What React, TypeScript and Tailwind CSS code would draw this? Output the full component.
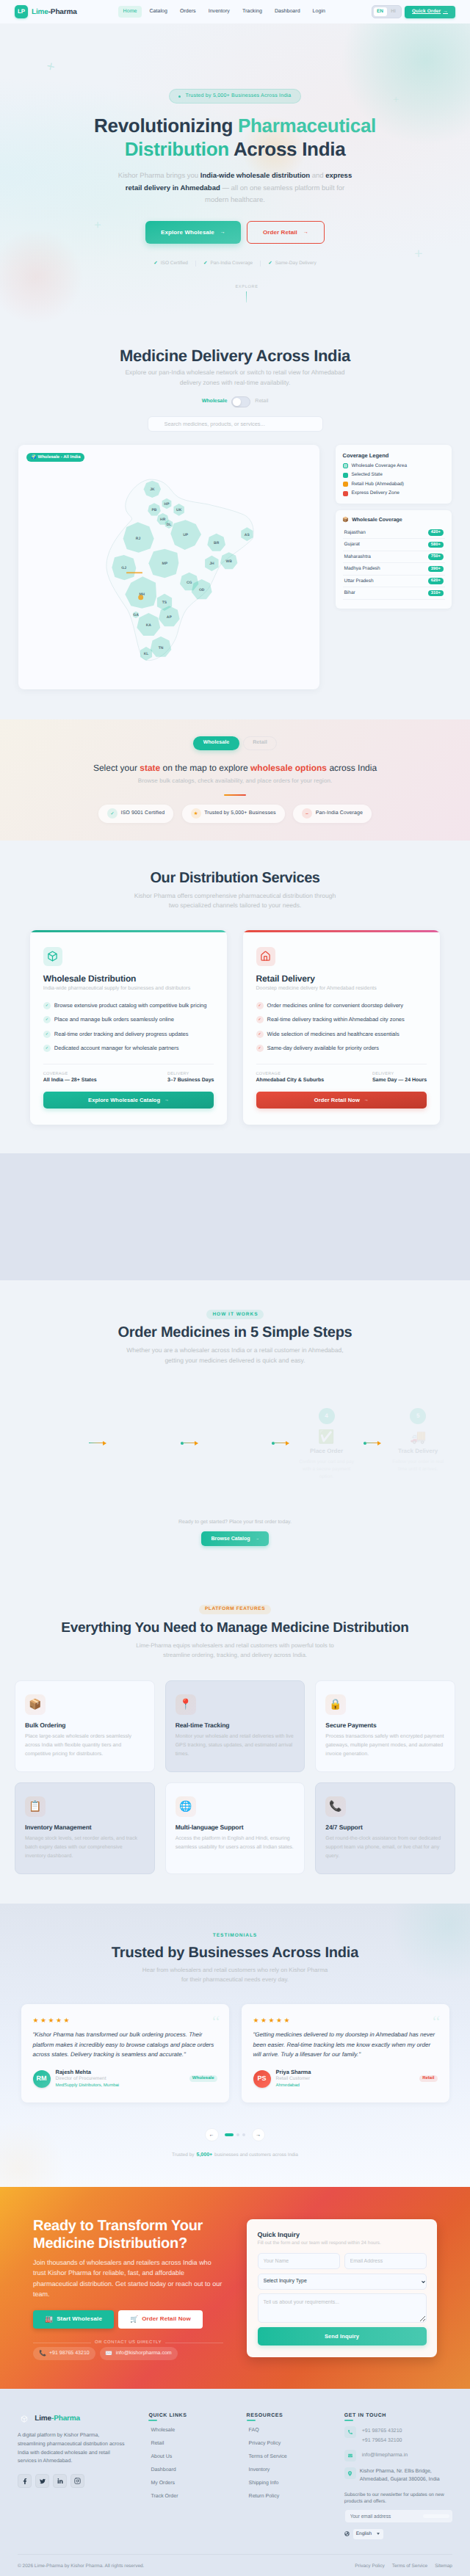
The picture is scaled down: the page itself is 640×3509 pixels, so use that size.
import type { ReactNode } from 'react';
import { Box, ChevronDown, House, Instagram } from 'lucide-react';
import { FaFacebookF, FaTwitter, FaLinkedinIn, FaPhone, FaEnvelope, FaGlobeAmericas } from 'react-icons/fa';
import { FaLocationDot } from 'react-icons/fa6';

interface MapState {
  code: string;
  x: number;
  y: number;
  r?: number;
  sides?: number;
  points?: string;
}

const navItems = ['Home', 'Catalog', 'Orders', 'Inventory', 'Tracking', 'Dashboard', 'Login'];

// Larger states carry their own outline, the rest are drawn as regular polygons
const mapStates: MapState[] = [
  { code: 'RJ', x: 144, y: 249, points: '143,183 190,201 209,250 194,291 146,307 98,293 83,250 97,203' },
  { code: 'UP', x: 338, y: 233, points: '338,174 380,191 402,233 376,278 335,296 294,276 277,230 290,188' },
  { code: 'MP', x: 253, y: 351, points: '253,292 304,308 310,350 299,395 253,411 205,398 187,351 207,303' },
  { code: 'GJ', x: 86, y: 368, points: '86,317 125,331 136,370 127,406 88,420 49,407 37,368 48,327' },
  { code: 'MH', x: 160, y: 477, points: '163,405 216,430 219,488 208,523 160,535 115,525 91,478 115,430' },
  { code: 'JK', x: 202, y: 48, r: 35, sides: 8 },
  { code: 'HP', x: 261, y: 107, r: 22, sides: 6 },
  { code: 'PB', x: 210, y: 132, r: 27, sides: 7 },
  { code: 'UK', x: 311, y: 132, r: 25, sides: 6 },
  { code: 'HR', x: 245, y: 171, r: 25, sides: 7 },
  { code: 'DL', x: 270, y: 191, r: 18, sides: 6 },
  { code: 'BR', x: 464, y: 267, r: 38, sides: 7 },
  { code: 'AS', x: 589, y: 232, r: 28, sides: 6 },
  { code: 'JH', x: 445, y: 351, r: 32, sides: 6 },
  { code: 'WB', x: 515, y: 342, r: 36, sides: 7 },
  { code: 'CG', x: 353, y: 427, r: 39, sides: 7 },
  { code: 'OD', x: 404, y: 459, r: 43, sides: 7 },
  { code: 'TS', x: 252, y: 510, r: 35, sides: 6 },
  { code: 'AP', x: 271, y: 569, r: 44, sides: 7 },
  { code: 'GA', x: 135, y: 561, r: 14, sides: 6 },
  { code: 'KA', x: 187, y: 603, r: 49, sides: 7 },
  { code: 'TN', x: 237, y: 694, r: 44, sides: 7 },
  { code: 'KL', x: 177, y: 720, r: 28, sides: 6 },
];

const coverage = [
  ['Rajasthan', '420+'],
  ['Gujarat', '580+'],
  ['Maharashtra', '750+'],
  ['Madhya Pradesh', '390+'],
  ['Uttar Pradesh', '620+'],
  ['Bihar', '310+'],
];

const legend = [
  { label: 'Wholesale Coverage Area', swatch: 'bg-[#a3e4d7] border border-[#1abc9c]' },
  { label: 'Selected State', swatch: 'bg-[#1abc9c]' },
  { label: 'Retail Hub (Ahmedabad)', swatch: 'bg-[#f39c12]' },
  { label: 'Express Delivery Zone', swatch: 'bg-[#e74c3c]' },
];

const features = [
  { icon: '📦', title: 'Bulk Ordering', text: 'Place large-scale wholesale orders seamlessly across India with flexible quantity tiers and competitive pricing for distributors.' },
  { icon: '📍', title: 'Real-time Tracking', text: 'Monitor your wholesale and retail deliveries with live GPS tracking, status updates, and estimated arrival times.' },
  { icon: '🔒', title: 'Secure Payments', text: 'Process transactions safely with encrypted payment gateways, multiple payment modes, and automated invoice generation.' },
  { icon: '📋', title: 'Inventory Management', text: 'Manage stock levels, set reorder alerts, and track batch expiry dates with our comprehensive inventory dashboard.' },
  { icon: '🌐', title: 'Multi-language Support', text: 'Access the platform in English and Hindi, ensuring seamless usability for users across all Indian states.' },
  { icon: '📞', title: '24/7 Support', text: 'Get round-the-clock assistance from our dedicated support team via phone, email, or live chat for any query.' },
];

function polygonPoints(cx: number, cy: number, r: number, sides: number) {
  return Array.from({ length: sides }, (_, i) => {
    const a = (i / sides) * Math.PI * 2 - Math.PI / 2;
    return `${(cx + r * Math.cos(a)).toFixed(1)},${(cy + r * Math.sin(a)).toFixed(1)}`;
  }).join(' ');
}

function Navbar() {
  return (
    <header className="flex h-8 items-center justify-between bg-[#f7faff] px-5">
      <div className="flex items-center gap-[5px]">
        <div className="flex size-[18px] items-center justify-center rounded-[5px] bg-[#1fbf9f] text-[8px] font-bold text-white shadow-[0_1px_3px_rgba(26,188,156,0.35)]">
          LP
        </div>
        <span className="text-[10px] font-bold tracking-[-0.16px] text-[#2c3e50]">
          <span className="text-[#1abc9c]">Lime</span>-Pharma
        </span>
      </div>
      <nav className="flex gap-[3px] text-[7px] tracking-[0.05px] text-[#34495e]">
        {navItems.map((item, i) => (
          <a
            key={item}
            className={i === 0 ? 'flex h-4 items-center rounded-[4px] bg-[#def5f0] px-[7px] text-[#1abc9c]' : 'flex h-4 items-center px-[7px]'}
          >
            {item}
          </a>
        ))}
      </nav>
      <div className="flex items-center gap-1">
        <div className="flex h-[18px] w-[41px] items-center rounded-[5px] border border-[#d3d9e6] bg-[#dde3ee] p-[1.5px] text-[6.5px] font-bold">
          <span className="flex h-3 w-[18px] items-center justify-center rounded-[3px] bg-white text-[#1abc9c]">EN</span>
          <span className="flex-1 text-center text-[#bdc3c7]">HI</span>
        </div>
        <a className="flex h-[17px] w-[69px] items-center justify-center gap-[3px] rounded-[4px] bg-linear-to-r from-[#1abc9c] to-[#2bc0a2] text-[6.5px] font-bold tracking-[0.15px] text-white underline shadow-[0_1px_3px_rgba(26,188,156,0.3)]">
          Quick Order <span className="underline">→</span>
        </a>
      </div>
    </header>
  );
}

function Hero() {
  return (
    <section className="relative h-[408px] overflow-hidden bg-[#eff3f8] pt-[89px]">
      {/* Soft background glows */}
      <div className="absolute inset-0 bg-[radial-gradient(ellipse_at_0%_50%,rgba(218,240,246,0.6),transparent_45%),radial-gradient(ellipse_at_25%_60%,rgba(218,242,234,0.4),transparent_45%),radial-gradient(ellipse_at_75%_30%,rgba(243,234,236,0.6),transparent_50%)]" />
      <div className="absolute left-[460px] top-[-70px] size-[240px] rounded-full bg-[radial-gradient(circle,rgba(26,188,156,0.18),rgba(26,188,156,0.09)_38%,transparent_68%)]" />
      <div className="absolute left-[-16px] top-[280px] size-[130px] rounded-full bg-[radial-gradient(circle,rgba(231,76,60,0.09),rgba(231,76,60,0.045)_40%,transparent_70%)]" />
      <div className="absolute left-[328px] top-[126px] size-[90px] rounded-full bg-[radial-gradient(circle,rgba(243,156,18,0.15),rgba(243,156,18,0.07)_40%,transparent_70%)]" />
      <span className="absolute left-[63px] top-[50px] rotate-12 text-[20px] leading-[18px] text-[#1abc9c]/20">+</span>
      <span className="absolute left-[535px] top-[95px] text-[14px] leading-4 text-[#1abc9c]/10">+</span>
      <span className="absolute left-[128px] top-[267px] text-[17px] leading-4 text-[#1abc9c]/15">+</span>
      <span className="absolute left-[564px] top-[306px] text-[20px] leading-4 text-[#1abc9c]/15">+</span>

      <div className="relative flex flex-col items-center text-center">
        <div className="flex h-5 items-center gap-[6px] rounded-full border border-[#1abc9c]/15 bg-[#1abc9c]/13 px-3 text-[7px] tracking-[0.24px] text-[#1abc9c]">
          <span className="size-[3px] rounded-full bg-[#1abc9c]/80" />
          Trusted by 5,000+ Businesses Across India
        </div>
        <h1 className="mt-[13.6px] text-[26px] font-bold leading-[32.5px] tracking-[-0.3px] text-[#2c3e50]">
          Revolutionizing <span className="text-[#40c6a8]">Pharmaceutical</span>
          <br />
          <span className="text-[#2fbf9f]">Distribution</span> Across India
        </h1>
        <p className="mt-[12.8px] w-[330px] text-[9.5px] leading-[16.5px] text-[#bdc3c7]">
          Kishor Pharma brings you <b className="text-[#2c3e50]">India-wide wholesale distribution</b> and{' '}
          <b className="text-[#2c3e50]">express retail delivery in Ahmedabad</b> — all on one seamless platform built for modern healthcare.
        </p>
        <div className="mt-[19.4px] flex gap-2 text-[8px] font-bold tracking-[0.1px]">
          <button className="flex h-[30.7px] w-[130px] items-center justify-center gap-2 rounded-[6px] bg-linear-to-br from-[#1abc9c] to-[#48c9b0] text-white shadow-[0_3px_8px_rgba(26,188,156,0.28)]">
            Explore Wholesale <span className="text-[7px]">→</span>
          </button>
          <button className="flex h-[30.7px] w-[106px] items-center justify-center gap-2 rounded-[6px] border border-[#e74c3c] text-[#e74c3c]">
            Order Retail <span className="text-[7px]">→</span>
          </button>
        </div>
        <div className="mt-[22px] flex h-[10px] items-center gap-[10px] text-[6.5px] text-[#bdc3c7]">
          {['ISO Certified', 'Pan-India Coverage', 'Same-Day Delivery'].map((item, i) => (
            <div key={item} className="flex items-center gap-[10px]">
              {i > 0 && <span className="h-2 w-px bg-[#dfe5ee]" />}
              <span className="flex items-center gap-1">
                <span className="font-bold text-[#1abc9c]">✓</span>
                {item}
              </span>
            </div>
          ))}
        </div>
        <div className="mt-[23.5px] flex flex-col items-center pl-8">
          <span className="text-[5.5px] leading-2 tracking-[0.75px] text-[#bdc3c7]">EXPLORE</span>
          <span className="mt-[2px] h-[15px] w-px bg-linear-to-b from-[#1abc9c]/60 to-[#1abc9c]/20" />
        </div>
      </div>
    </section>
  );
}

function IndiaMap() {
  return (
    <svg viewBox="0 0 1230 999" className="h-full w-full">
      <g transform="translate(345 133)">
        <path
          d="M200 8 C150 5 85 75 93 125 C97 155 125 160 117 174 C80 215 10 290 15 370 C20 430 75 500 100 540 C125 580 140 690 155 722 C162 745 175 748 190 748 C240 745 290 690 304 640 C315 600 325 560 345 535 C375 500 420 480 440 440 C460 400 470 370 485 352 C520 320 580 285 612 250 C622 210 610 165 570 150 C520 130 460 118 430 110 C390 102 320 98 295 70 C270 45 260 12 200 8 Z"
          fill="rgba(26,188,156,0.02)"
          stroke="#d3e6e8"
          strokeWidth="2"
        />
        {mapStates.map(s => (
          <polygon key={s.code} points={s.points ?? polygonPoints(s.x, s.y, s.r!, s.sides!)} fill="#1abc9c" fillOpacity="0.24" />
        ))}
        {mapStates.map(s => (
          <text key={s.code} x={s.x} y={s.y + 5.5} textAnchor="middle" fontSize="15" fontWeight="bold" fill="#2c3e50" fillOpacity="0.75">
            {s.code}
          </text>
        ))}
        <rect x="96" y="386" width="66" height="7" rx="2" fill="#f39c12" fillOpacity="0.65" />
        <circle cx="155" cy="490" r="10.5" fill="#f39c12" fillOpacity="0.8" />
      </g>
    </svg>
  );
}

function DeliveryMap() {
  return (
    <section className="h-[539.7px] pt-[31.7px] text-center">
      <h2 className="text-[22px] font-bold leading-[26px] tracking-[-0.31px] text-[#2c3e50]">Medicine Delivery Across India</h2>
      <p className="mx-auto mt-[3.5px] w-[310px] text-[8.5px] leading-[13.6px] text-[#bdc3c7]">
        Explore our pan-India wholesale network or switch to retail view for Ahmedabad delivery zones with real-time availability.
      </p>
      <div className="mt-[11.6px] flex h-[14.7px] items-center justify-center gap-[6px] text-[7px]">
        <span className="font-bold text-[#1abc9c]">Wholesale</span>
        <span className="flex h-[14.7px] w-[26px] items-center rounded-full border border-[#cfd5e1] bg-[#dfe5f0] px-[1px]">
          <span className="size-[11px] rounded-full bg-white shadow-sm" />
        </span>
        <span className="text-[#bdc3c7]">Retail</span>
      </div>
      <input
        className="mt-[12px] block h-[21.6px] w-[239px] mx-auto rounded-[6px] border border-[#e6ebf3] bg-[#fafcff] pl-[22px] text-[7.4px] placeholder:text-[#bdc3c7]"
        placeholder="Search medicines, products, or services..."
      />

      <div className="mx-[25px] mt-[17.4px] flex items-start gap-[22px] text-left">
        <div className="relative h-[333px] w-[410px] rounded-[8px] bg-[#fafbff] shadow-[0_2px_10px_rgba(44,62,80,0.06)]">
          <IndiaMap />
          <span className="absolute left-[11.3px] top-[11.6px] flex h-3 w-[79px] items-center justify-center gap-[2px] rounded-full bg-[#1abc9c] text-[6px] font-bold text-white">
            <span>🌍</span> Wholesale - All India
          </span>
        </div>
        <div className="flex w-[158px] flex-col gap-[9px]">
          <div className="h-20 rounded-[6px] bg-[#fafcfe] pl-[9.5px] pt-[10px] shadow-[0_1px_5px_rgba(44,62,80,0.05)]">
            <h3 className="text-[7.5px] font-bold leading-[9px] text-[#2c3e50]">Coverage Legend</h3>
            <ul className="mt-[3.8px] text-[6.5px] text-[#34495e]">
              {legend.map(l => (
                <li key={l.label} className="flex h-[12.5px] items-center gap-[5px]">
                  <span className={`size-[7px] rounded-[2px] ${l.swatch}`} />
                  {l.label}
                </li>
              ))}
            </ul>
          </div>
          <div className="h-[134px] rounded-[6px] bg-[#fafcfe] px-[9.5px] pt-[9.5px] shadow-[0_1px_5px_rgba(44,62,80,0.05)]">
            <h3 className="flex items-center gap-1 text-[7px] font-bold leading-[9px] text-[#2c3e50]">
              <span>📦</span> Wholesale Coverage
            </h3>
            <ul className="mt-[4.5px] text-[6.5px] text-[#34495e]">
              {coverage.map(([name, count]) => (
                <li key={name} className="flex h-[16.5px] items-center justify-between border-b border-[#eef1f6] pl-[2px] pr-[2px]">
                  {name}
                  <span className="flex h-[8.5px] w-[20.4px] items-center justify-center rounded-full bg-[#1abc9c] text-[5.75px] font-bold text-white">
                    {count}
                  </span>
                </li>
              ))}
            </ul>
          </div>
        </div>
      </div>
    </section>
  );
}

function ModeBanner() {
  const chips = [
    { icon: '✓', label: 'ISO 9001 Certified', style: 'bg-[#1abc9c]/12 text-[#1abc9c]' },
    { icon: '★', label: 'Trusted by 5,000+ Businesses', style: 'bg-[#f39c12]/12 text-[#f39c12]' },
    { icon: '⇔', label: 'Pan-India Coverage', style: 'bg-[#e74c3c]/12 text-[#e74c3c]' },
  ];
  return (
    <section className="flex h-[165.6px] flex-col items-center bg-[linear-gradient(135deg,#f6f2e9,#f3ecea_45%,#f3e5ec)] pt-[23.3px]">
      <div className="flex gap-[5px] text-[7px] font-bold tracking-[0.1px]">
        <span className="flex h-[19.3px] w-[63px] items-center justify-center rounded-full bg-[#1abc9c] text-white shadow-[0_2px_6px_rgba(26,188,156,0.3)]">
          Wholesale
        </span>
        <span className="flex h-[19.3px] w-[46px] items-center justify-center rounded-full border border-[#e8e4e6] text-[#bdc3c7]">Retail</span>
      </div>
      <h2 className="mt-[15.7px] text-[12px] leading-4 text-[#2c3e50]">
        Select your <b className="text-[#e74c3c]">state</b> on the map to explore <b className="text-[#e74c3c]">wholesale options</b> across India
      </h2>
      <p className="mt-[3.7px] text-[8px] leading-3 tracking-[0.065px] text-[#bdc3c7]">
        Browse bulk catalogs, check availability, and place orders for your region.
      </p>
      <span className="mt-[12.3px] h-[2px] w-[30px] rounded-full bg-linear-to-r from-[#f39c12] to-[#e74c3c]" />
      <div className="mt-3 flex gap-[11.5px] text-[7px] tracking-[0.12px] text-[#34495e]">
        {chips.map(c => (
          <span key={c.label} className="flex h-[25px] items-center gap-[4.5px] rounded-full bg-white/70 px-3 shadow-[0_1px_4px_rgba(44,62,80,0.04)]">
            <span className={`flex size-[14px] items-center justify-center rounded-full text-[6.5px] ${c.style}`}>{c.icon}</span>
            {c.label}
          </span>
        ))}
      </div>
    </section>
  );
}

interface ServiceCardProps {
  retail?: boolean;
  icon: ReactNode;
  title: string;
  subtitle: string;
  points: string[];
  area: string;
  delivery: string;
  cta: string;
}

function ServiceCard({ retail = false, icon, title, subtitle, points, area, delivery, cta }: ServiceCardProps) {
  const tint = retail ? 'bg-[#e74c3c]/13 text-[#e74c3c]' : 'bg-[#1abc9c]/13 text-[#1abc9c]';
  return (
    <div className="relative h-[264.7px] flex-1 overflow-hidden rounded-[8px] bg-[#fbfdfe] px-[17.8px] pt-[22.7px] shadow-[0_2px_8px_rgba(44,62,80,0.07)]">
      <div className={`absolute inset-x-0 top-0 h-[2.5px] bg-linear-to-r ${retail ? 'from-[#e74c3c] to-[#e0609a]' : 'from-[#1fae90] to-[#48c9b0]'}`} />
      <div className={`flex size-[26px] items-center justify-center rounded-[6px] ${tint}`}>{icon}</div>
      <h3 className="mt-[9.7px] text-[12px] font-bold leading-[14px] tracking-[-0.16px] text-[#2c3e50]">{title}</h3>
      <p className="mt-[2.3px] text-[7px] leading-[10px] text-[#bdc3c7]">{subtitle}</p>
      <ul className="mt-[13.3px] flex flex-col gap-[9.2px] text-[7.5px] leading-[10px] text-[#34495e]">
        {points.map(p => (
          <li key={p} className="flex items-center gap-[5px] whitespace-nowrap">
            <span className={`flex size-[10px] items-center justify-center rounded-full text-[5px] ${tint}`}>✓</span>
            {p}
          </li>
        ))}
      </ul>
      <div className="mt-[16.6px] flex justify-between border-t border-[#edf0f4] pt-[9.5px]">
        {[['COVERAGE', area], ['DELIVERY', delivery]].map(([label, value]) => (
          <div key={label}>
            <div className="text-[5.5px] leading-[7px] tracking-[0.3px] text-[#bdc3c7]">{label}</div>
            <div className="text-[7px] font-bold leading-[9px] text-[#2c3e50]">{value}</div>
          </div>
        ))}
      </div>
      <button
        className={`mt-[11.2px] flex h-[23px] w-full items-center justify-center gap-[6px] rounded-[5px] bg-linear-to-br text-[7.5px] font-bold tracking-[0.07px] text-white ${
          retail ? 'from-[#e74c3c] to-[#c0392b] shadow-[0_2px_6px_rgba(231,76,60,0.25)]' : 'from-[#1abc9c] to-[#16a085] shadow-[0_2px_6px_rgba(26,188,156,0.28)]'
        }`}
      >
        {cta} <span className="text-[6px]">→</span>
      </button>
    </div>
  );
}

function Services() {
  return (
    <section className="h-[425.7px] pt-[39px] text-center">
      <h2 className="text-[20px] font-bold leading-6 tracking-[-0.4px] text-[#2c3e50]">Our Distribution Services</h2>
      <p className="mx-auto mt-[5.7px] w-[280px] text-[8.5px] leading-[13.5px] text-[#bdc3c7]">
        Kishor Pharma offers comprehensive pharmaceutical distribution through two specialized channels tailored to your needs.
      </p>
      <div className="mx-[41px] mt-[26.3px] flex gap-[21.5px] text-left">
        <ServiceCard
          icon={<Box size={15} strokeWidth={2} />}
          title="Wholesale Distribution"
          subtitle="India-wide pharmaceutical supply for businesses and distributors"
          points={[
            'Browse extensive product catalog with competitive bulk pricing',
            'Place and manage bulk orders seamlessly online',
            'Real-time order tracking and delivery progress updates',
            'Dedicated account manager for wholesale partners',
          ]}
          area="All India — 28+ States"
          delivery="3–7 Business Days"
          cta="Explore Wholesale Catalog"
        />
        <ServiceCard
          retail
          icon={<House size={15} strokeWidth={2} />}
          title="Retail Delivery"
          subtitle="Doorstep medicine delivery for Ahmedabad residents"
          points={[
            'Order medicines online for convenient doorstep delivery',
            'Real-time delivery tracking within Ahmedabad city zones',
            'Wide selection of medicines and healthcare essentials',
            'Same-day delivery available for priority orders',
          ]}
          area="Ahmedabad City & Suburbs"
          delivery="Same Day — 24 Hours"
          cta="Order Retail Now"
        />
      </div>
    </section>
  );
}

function StepArrow({ dot }: { dot: boolean }) {
  return (
    <div className="mt-[45px] flex h-[6px] w-6 shrink-0 items-center">
      {dot && <span className="-mr-1 size-1 rounded-full bg-[#1abc9c]" />}
      <span className="h-px flex-1 bg-linear-to-r from-[#1abc9c] to-[#f39c12]" />
      <span className="border-y-[3px] border-l-[5px] border-y-transparent border-l-[#f39c12]" />
    </div>
  );
}

function Step({ n, icon, title, text, fade }: { n: number; icon: string; title: string; text: string; fade: string }) {
  return (
    <div className={`flex flex-1 flex-col items-center text-center ${fade}`}>
      <span className="flex size-[22px] items-center justify-center rounded-full bg-[#1abc9c] text-[8px] font-bold text-white">{n}</span>
      <span className="mt-[5px] text-[18px] leading-6">{icon}</span>
      <h3 className="mt-[3px] text-[8px] font-bold leading-[10px] text-[#2c3e50]">{title}</h3>
      <p className="mt-[5px] w-[80px] text-[6.5px] leading-[10px] text-[#bdc3c7]">{text}</p>
    </div>
  );
}

function HowItWorks() {
  return (
    <section className="flex h-[416px] flex-col items-center pt-10 text-center">
      <span className="flex h-[13px] items-center rounded-full bg-[#1abc9c]/10 pl-2 pr-[7px] text-[6.5px] font-bold tracking-[1px] text-[#1abc9c]">HOW IT WORKS</span>
      <h2 className="mt-[6.3px] text-[20px] font-bold leading-6 tracking-[-0.27px] text-[#2c3e50]">Order Medicines in 5 Simple Steps</h2>
      <p className="mt-[5.9px] w-[310px] text-[8.5px] leading-[13.6px] text-[#bdc3c7]">
        Whether you are a wholesaler across India or a retail customer in Ahmedabad, getting your medicines delivered is quick and easy.
      </p>
      <div className="mt-[57.3px] flex h-[120px] w-[599px] items-start">
        <div className="flex-1" />
        <StepArrow dot={false} />
        <div className="flex-1" />
        <StepArrow dot />
        <div className="flex-1" />
        <StepArrow dot />
        <Step n={4} icon="✅" title="Place Order" text="Confirm your cart and pay with a secure payment option." fade="opacity-12" />
        <StepArrow dot />
        <Step n={5} icon="🚚" title="Track Delivery" text="Follow your order in real time until it arrives." fade="opacity-10" />
      </div>
      <p className="mt-[31px] text-[7px] leading-[10px] text-[#bdc3c7]">Ready to get started? Place your first order today.</p>
      <button className="mt-[7px] flex h-[20.5px] w-[92px] items-center justify-center gap-2 rounded-[5px] bg-linear-to-r from-[#1abc9c] to-[#48c9b0] text-[7px] font-bold text-white shadow-[0_2px_5px_rgba(26,188,156,0.3)]">
        Browse Catalog <span className="text-[4px]">→</span>
      </button>
    </section>
  );
}

function Features() {
  return (
    <section className="flex h-[433px] flex-col items-center pt-[25.7px] text-center">
      <span className="flex h-[13px] items-center rounded-full bg-[#f39c12]/10 px-2 text-[6.5px] font-bold tracking-[0.6px] text-[#e67e22]">PLATFORM FEATURES</span>
      <h2 className="mt-[7.3px] text-[19px] font-bold leading-6 tracking-[-0.27px] text-[#2c3e50]">Everything You Need to Manage Medicine Distribution</h2>
      <p className="mt-[5.5px] w-[280px] text-[8px] leading-[13px] text-[#bdc3c7]">
        Lime-Pharma equips wholesalers and retail customers with powerful tools to streamline ordering, tracking, and delivery across India.
      </p>
      <div className="mt-[27.8px] grid w-[600px] grid-cols-3 gap-x-[14px] gap-y-[14.6px] text-left">
        {features.map((f, i) => (
          <div
            key={f.title}
            className={
              i % 2
                ? 'h-[124.4px] rounded-[8px] border border-[#d3dce9] bg-[#dfe5f0] px-[13px] pt-[17.7px]'
                : 'h-[124.4px] rounded-[8px] border border-[#e8edf5] bg-[#f7faff] px-[13px] pt-[17.7px]'
            }
          >
            <div className="flex size-7 items-center justify-center rounded-[7px] bg-linear-to-br from-[#e67e22]/10 to-[#e74c3c]/6 text-[14px]">{f.icon}</div>
            <h3 className="mt-[9px] text-[8.5px] font-bold leading-[11px] tracking-[-0.1px] text-[#2c3e50]">{f.title}</h3>
            <p className="mt-[4.5px] text-[7px] leading-[11.55px] text-[#bdc3c7]">{f.text}</p>
          </div>
        ))}
      </div>
    </section>
  );
}

interface TestimonialProps {
  quote: string;
  initials: string;
  name: string;
  role: string;
  company: string;
  retail?: boolean;
}

function Testimonial({ quote, initials, name, role, company, retail = false }: TestimonialProps) {
  return (
    <div className="relative h-[134px] w-[283px] rounded-[8px] bg-[#fafbfe] px-4 pt-[18.3px] text-left shadow-[0_2px_6px_rgba(44,62,80,0.06)]">
      <span className="absolute right-[12px] top-[13px] font-['Liberation_Serif',serif] text-[24px] leading-6 text-[#1abc9c]/12">“</span>
      <div className="flex h-2 items-center gap-[3.5px] text-[9px] leading-2 text-[#f39c12]">
        {[0, 1, 2, 3, 4].map(i => (
          <span key={i} className="w-[7px]">★</span>
        ))}
      </div>
      <p className="mt-[8.9px] text-[8px] italic leading-[13.6px] text-[#34495e]">{quote}</p>
      <div className="mt-[14px] flex h-6 items-center">
        <span
          className={`flex size-6 items-center justify-center rounded-full text-[9px] font-bold text-white shadow-sm ${
            retail ? 'bg-linear-to-br from-[#e74c3c] to-[#ff6b5b]' : 'bg-linear-to-br from-[#1abc9c] to-[#48c9b0]'
          }`}
        >
          {initials}
        </span>
        <div className="ml-[7px] flex-1 leading-[9.3px]">
          <div className="text-[7.5px] font-bold text-[#2c3e50]">{name}</div>
          <div className="text-[6.5px] text-[#bdc3c7]">{role}</div>
          <div className="text-[6px] text-[#1abc9c]">{company}</div>
        </div>
        <span
          className={`flex h-[9px] items-center rounded-full px-1 text-[6px] font-bold ${
            retail ? 'bg-[#e74c3c]/12 text-[#e74c3c]' : 'bg-[#1abc9c]/12 text-[#1abc9c]'
          }`}
        >
          {retail ? 'Retail' : 'Wholesale'}
        </span>
      </div>
    </div>
  );
}

function Testimonials() {
  return (
    <section className="relative flex h-[386px] flex-col items-center overflow-hidden bg-linear-to-b from-[#dfe5ef] via-[#eaf0fa] to-[#f7faff] pt-[40.3px] text-center">
      <div className="absolute right-[-50px] top-[-50px] size-[160px] rounded-full bg-[radial-gradient(circle,rgba(26,188,156,0.08),transparent_70%)]" />
      <div className="absolute bottom-[-40px] left-[-40px] size-[130px] rounded-full bg-[radial-gradient(circle,rgba(243,156,18,0.06),transparent_70%)]" />
      <span className="text-[6.5px] font-bold leading-2 tracking-[1px] text-[#1abc9c]">TESTIMONIALS</span>
      <h2 className="mt-[6.7px] text-[20px] font-bold leading-6 tracking-[-0.19px] text-[#2c3e50]">Trusted by Businesses Across India</h2>
      <p className="mt-[5.9px] w-[258px] text-[8px] leading-[12.8px] text-[#bdc3c7]">
        Hear from wholesalers and retail customers who rely on Kishor Pharma for their pharmaceutical needs every day.
      </p>
      <div className="mt-[26.5px] flex w-[583px] gap-[17px]">
        <Testimonial
          quote={'"Kishor Pharma has transformed our bulk ordering process. Their platform makes it incredibly easy to browse catalogs and place orders across states. Delivery tracking is seamless and accurate."'}
          initials="RM"
          name="Rajesh Mehta"
          role="Director of Procurement"
          company="MedSupply Distributors, Mumbai"
        />
        <Testimonial
          retail
          quote={'"Getting medicines delivered to my doorstep in Ahmedabad has never been easier. Real-time tracking lets me know exactly when my order will arrive. Truly a lifesaver for our family."'}
          initials="PS"
          name="Priya Sharma"
          role="Retail Customer"
          company="Ahmedabad"
        />
      </div>
      <div className="mt-[35px] flex h-[18px] items-center text-[7px] text-[#2c3e50]">
        <button className="size-[18.5px] rounded-full border border-[#edf1f7] bg-white">←</button>
        <div className="mx-[8.5px] flex items-center gap-1">
          <span className="h-1 w-3 rounded-full bg-[#1abc9c]" />
          <span className="size-1 rounded-full bg-[#dbe1ec]" />
          <span className="size-1 rounded-full bg-[#dbe1ec]" />
        </div>
        <button className="size-[18.5px] rounded-full border border-[#edf1f7] bg-white">→</button>
      </div>
      <p className="mt-[14px] text-[6.5px] leading-[10px] text-[#bdc3c7]">
        Trusted by <b className="mx-[1.2px] text-[7px] text-[#1abc9c]">5,000+</b> businesses and customers across India
      </p>
    </section>
  );
}

function ContactCta() {
  const field = 'rounded-[5px] border border-[#e6ebf5] bg-[#f7faff] px-[7px] text-[7px] placeholder:text-[#bdc3c7]';
  return (
    <section className="flex h-[275px] gap-8 bg-[linear-gradient(135deg,#f7af30,#ef8a33_15%,#ec7038_32%,#e75049_50%,#e36030_72%,#e68a38)] px-[45px]">
      <div className="w-[259px] shrink-0 pt-[41px]">
        <h2 className="text-[20px] font-bold leading-6 tracking-[-0.26px] text-white">
          Ready to Transform Your
          <br />
          Medicine Distribution?
        </h2>
        <p className="mt-[7.1px] whitespace-nowrap text-[9px] leading-[14.4px] text-white/85">
          Join thousands of wholesalers and retailers across India who
          <br />
          trust Kishor Pharma for reliable, fast, and affordable
          <br />
          pharmaceutical distribution. Get started today or reach out to our
          <br />
          team.
        </p>
        <div className="mt-[14.3px] flex gap-[6px] text-[8px] font-bold tracking-[0.12px]">
          <button className="flex h-[25px] w-[110px] items-center justify-center gap-[5px] rounded-[4px] bg-[#1abc9c] text-white shadow-[0_2px_6px_rgba(0,0,0,0.18)]">
            <span className="text-[9px]">🏭</span> Start Wholesale
          </button>
          <button className="flex h-[25px] w-[115px] items-center justify-center gap-[5px] rounded-[4px] bg-white text-[#e74c3c]">
            <span className="text-[9px]">🛒</span> Order Retail Now
          </button>
        </div>
        <div className="mt-[15.3px] flex items-center gap-[5px] text-[6px] leading-2 tracking-[0.5px] text-white/70">
          <span className="h-px flex-1 bg-white/20" />
          OR CONTACT US DIRECTLY
          <span className="h-px flex-1 bg-white/20" />
        </div>
        <div className="mt-[1.7px] flex gap-[6px] text-[7px] text-white/85">
          <span className="flex h-[18px] items-center gap-1 rounded-full bg-white/15 px-2">
            <span className="text-[8px]">📞</span> +91 98765 43210
          </span>
          <span className="flex h-[18px] items-center gap-1 rounded-full bg-white/15 px-2">
            <span className="text-[8px]">✉️</span> info@kishorpharma.com
          </span>
        </div>
      </div>
      <form className="mt-11 flex h-[188px] w-[259px] shrink-0 flex-col rounded-[8px] bg-[#fdf8f6] px-[14.5px] pt-[16.2px] shadow-[0_6px_16px_rgba(0,0,0,0.16)]">
        <h3 className="text-[9px] font-bold leading-[11px] text-[#2c3e50]">Quick Inquiry</h3>
        <p className="mt-[1.8px] text-[6.5px] leading-2 text-[#c9c9cb]">Fill out the form and our team will respond within 24 hours.</p>
        <div className="mt-[9.3px] flex gap-[6px]">
          <input className={`h-[21.4px] w-0 flex-1 ${field}`} placeholder="Your Name" />
          <input className={`h-[21.4px] w-0 flex-1 ${field}`} placeholder="Email Address" />
        </div>
        <div className="relative mt-[6px]">
          <select className={`block h-[22px] w-full appearance-none text-[#2c3e50] ${field}`}>
            <option>Select Inquiry Type</option>
          </select>
          <ChevronDown size={7} strokeWidth={4} className="absolute right-[1px] top-2 text-[#2c3e50]" />
        </div>
        <textarea className={`mt-[5.5px] h-[40.3px] shrink-0 py-[6px] ${field}`} placeholder="Tell us about your requirements..." />
        <button className="mt-[5.8px] h-[24.4px] rounded-[5px] bg-linear-to-r from-[#1abc9c] to-[#48c9b0] text-[7.5px] font-bold tracking-[0.15px] text-white shadow-[0_2px_6px_rgba(26,188,156,0.25)]">
          Send Inquiry
        </button>
      </form>
    </section>
  );
}

function FooterHeading({ children }: { children: ReactNode }) {
  return (
    <div>
      <h4 className="text-[7px] font-bold leading-[9px] tracking-[0.6px] text-[#2c3e50]">{children}</h4>
      <span className="mt-[1px] block h-[2px] w-3 rounded-full bg-[#48c9b0]" />
    </div>
  );
}

function FooterLinks({ title, links }: { title: string; links: string[] }) {
  return (
    <div className="w-[133.2px]">
      <FooterHeading>{title}</FooterHeading>
      <ul className="mt-2 flex flex-col gap-2 pl-[3px] text-[7px] leading-[10px] text-[#6b7a89]">
        {links.map(l => (
          <li key={l}>{l}</li>
        ))}
      </ul>
    </div>
  );
}

function ContactIcon({ children }: { children: ReactNode }) {
  return <span className="flex size-4 shrink-0 items-center justify-center rounded-[4px] bg-[#1abc9c]/6 text-[7px] text-[#48c9b0]">{children}</span>;
}

function Footer() {
  return (
    <footer className="h-[255px] bg-[#dfe6f1] px-6 pt-8">
      <div className="flex h-[193px]">
        <div className="w-[178.4px]">
          <div className="flex h-[18px] items-center">
            <span className="flex size-[18px] items-center justify-center text-white">
              <Box size={10} />
            </span>
            <span className="ml-[5.3px] text-[10px] font-bold tracking-[-0.16px] text-[#2c3e50]">
              Lime<span className="text-[#1abc9c]">-Pharma</span>
            </span>
          </div>
          <p className="mt-[7.8px] w-[148px] text-[7px] leading-[11.9px] text-[#6b7a89]">
            A digital platform by Kishor Pharma,
            <br />
            streamlining pharmaceutical distribution across India with dedicated wholesale and retail services in Ahmedabad.
          </p>
          <div className="mt-[10.7px] flex gap-[5px] text-[8px] text-[#2c3e50]">
            {[<FaFacebookF />, <FaTwitter />, <FaLinkedinIn />, <Instagram size={9} />].map((icon, i) => (
              <span key={i} className="flex size-[19px] items-center justify-center rounded-[4px] border border-[#cfd7e2] bg-[#d8dfe9]">
                {icon}
              </span>
            ))}
          </div>
        </div>
        <FooterLinks title="QUICK LINKS" links={['Wholesale', 'Retail', 'About Us', 'Dashboard', 'My Orders', 'Track Order']} />
        <FooterLinks title="RESOURCES" links={['FAQ', 'Privacy Policy', 'Terms of Service', 'Inventory', 'Shipping Info', 'Return Policy']} />
        <div className="w-[147px]">
          <FooterHeading>GET IN TOUCH</FooterHeading>
          <div className="mt-[7px] flex text-[7px] leading-[12.7px] text-[#8794a2]">
            <ContactIcon><FaPhone className="-scale-x-100" size={6} /></ContactIcon>
            <div className="ml-2 mt-[1px]">
              +91 98765 43210
              <br />
              +91 79654 32100
            </div>
          </div>
          <div className="mt-[6px] flex h-4 items-center text-[7px] text-[#8794a2]">
            <ContactIcon><FaEnvelope size={6} /></ContactIcon>
            <span className="ml-2">info@limepharma.in</span>
          </div>
          <div className="mt-[8px] flex text-[7px] leading-[11px] text-[#6b7a89]">
            <ContactIcon><FaLocationDot size={7} /></ContactIcon>
            <span className="ml-[5px]">
              Kishor Pharma, Nr. Ellis Bridge,
              <br />
              Ahmedabad, Gujarat 380006, India
            </span>
          </div>
          <p className="mt-[10.4px] text-[6.5px] leading-[9.4px] text-[#6b7a89]">
            Subscribe to our newsletter for updates on new
            <br />
            products and offers.
          </p>
          <div className="mt-[6.6px] ml-[1px] flex h-[17px] items-center justify-between rounded-[4px] bg-[#eef2f9] pl-[7px] pr-1">
            <input className="w-[80px] text-[6.5px] placeholder:text-[#6b7a89]" placeholder="Your email address" />
            <span className="h-[5px] w-9 rounded-full bg-[#f5f8fc]" />
          </div>
          <div className="mt-[9px] flex h-[13.5px] items-center gap-[5px] text-[#5d6d7e]">
            <FaGlobeAmericas size={7} />
            <span className="flex h-[13.5px] w-[41px] items-center justify-between rounded-[3px] bg-[#f0f4fa] px-1 text-[6.5px] text-[#34495e]">
              English
              <span className="mr-[1px] border-x-[2.5px] border-t-[3px] border-x-transparent border-t-[#5d6d7e]" />
            </span>
          </div>
        </div>
      </div>
      <div className="flex items-center justify-between border-t border-[#d3dae5] pt-[10.7px] text-[6.5px] leading-[10px] text-[#8794a2]">
        <span>© 2026 Lime-Pharma by Kishor Pharma. All rights reserved.</span>
        <div className="flex gap-[10px]">
          <span>Privacy Policy</span>
          <span>Terms of Service</span>
          <span>Sitemap</span>
        </div>
      </div>
    </footer>
  );
}

export default function App() {
  return (
    <div className="h-[3509px] w-[640px] overflow-hidden bg-[#eff3f8] font-['Liberation_Sans',Arial,sans-serif] [text-rendering:geometricPrecision]">
      <Navbar />
      <Hero />
      <DeliveryMap />
      <ModeBanner />
      <Services />
      <div className="h-[173px] bg-[#dde3ee]" />
      <HowItWorks />
      <Features />
      <Testimonials />
      <ContactCta />
      <Footer />
    </div>
  );
}
